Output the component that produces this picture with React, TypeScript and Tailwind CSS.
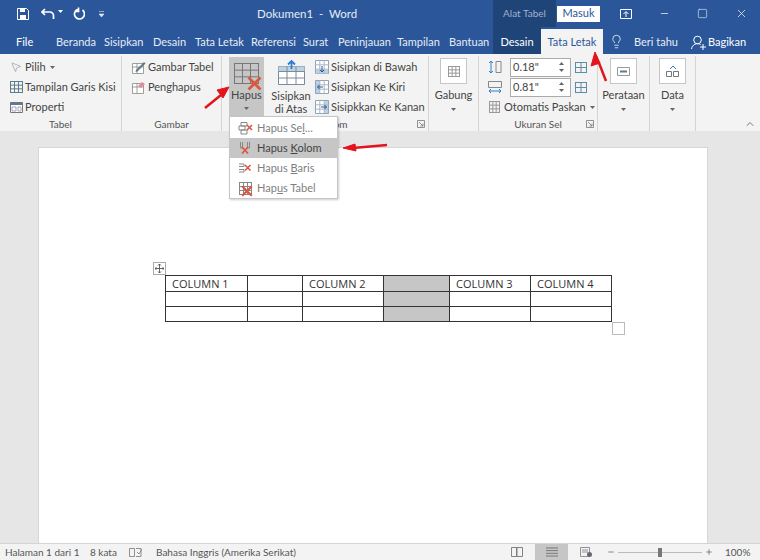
import { ReactNode } from "react";
import { Minus, Plus, Square, X, Lightbulb, ChevronUp, MousePointer2 } from "lucide-react";

const blue = "#2b579a";

const Caret = ({ className = "" }: { className?: string }) => (
  <svg width="5" height="3" viewBox="0 0 5 3" className={className}>
    <path d="M0 0h5L2.500 3z" fill="#666" />
  </svg>
);

// little table glyph used across the ribbon
const Grid = ({ w = 14, h = 14, cols = 3, rows = 3, stroke = "#7d8a99" }: { w?: number; h?: number; cols?: number; rows?: number; stroke?: string }) => {
  const v = Array.from({ length: cols + 1 }, (_, i) => (i * (w - 1)) / cols + 0.5);
  const r = Array.from({ length: rows + 1 }, (_, i) => (i * (h - 1)) / rows + 0.5);
  return (
    <svg width={w} height={h} viewBox={`0 0 ${w} ${h}`} className="shrink-0">
      {v.map((x) => <line key={x} x1={x} x2={x} y1="0" y2={h} stroke={stroke} strokeWidth="1" />)}
      {r.map((y) => <line key={y} y1={y} y2={y} x1="0" x2={w} stroke={stroke} strokeWidth="1" />)}
    </svg>
  );
};

const RedX = ({ size = 10 }: { size?: number }) => (
  <svg width={size} height={size} viewBox="0 0 10 10" className="shrink-0">
    <path d="M1 1l8 8M9 1L1 9" stroke="#d9573f" strokeWidth="1.800" />
  </svg>
);

const Launcher = () => (
  <svg width="8" height="8" viewBox="0 0 8 8" className="absolute bottom-[3px] right-[3px]">
    <path d="M.5.5h7v7h-7z M2 2l4 4M6 3.500V6H3.500" fill="none" stroke="#777" strokeWidth=".8" />
  </svg>
);

const Group = ({ label, width, children, launcher, labelClass = "" }: { label: string; width: string; children: ReactNode; launcher?: boolean; labelClass?: string }) => (
  <div className={`${width} relative flex h-[75px] shrink-0 flex-col border-r border-[#d4d4d4]`}>
    <div className="flex h-[62px] items-start">{children}</div>
    <div className={`absolute bottom-0 left-0 right-0 text-center text-[10px] leading-[13px] text-[#555] ${labelClass}`}>{label}</div>
    {launcher && <Launcher />}
  </div>
);

const SmallBtn = ({ icon, children }: { icon: ReactNode; children: ReactNode }) => (
  <div className="flex h-5 items-center gap-[2px] whitespace-nowrap text-[11px] text-[#444]">
    <span className="flex w-[14px] justify-center">{icon}</span>
    {children}
  </div>
);

const BoxBtn = ({ label, icon }: { label: string; icon: ReactNode }) => (
  <div className="flex w-full flex-col items-center pt-[2px] text-[11px] text-[#444]">
    <div className="flex h-[26px] w-[27px] items-center justify-center border border-[#c6c6c6] bg-white">{icon}</div>
    <div className="mt-[4px] leading-[14px]">{label}</div>
    <Caret className="mt-[6px]" />
  </div>
);

// insert row / column glyphs: grid with one tinted band and a small blue arrow
const InsertIcon = ({ band, arrow }: { band: string; arrow: string }) => (
  <svg width="14" height="14" viewBox="0 0 14 14">
    <path d="M.5.500h13v13H.5z" fill="#fff" stroke="#8ea3b5" />
    <path d={band} fill="#bcd3e6" />
    <path d="M.5 4.800h13M.5 9.200h13M4.800.5v13M9.200.5v13" stroke="#a9b8c6" />
    <path d={arrow} fill="none" stroke="#2b579a" />
  </svg>
);

const tabs = [
  { name: "Beranda", w: "w-[48px]" },
  { name: "Sisipkan", w: "w-[49px]" },
  { name: "Desain", w: "w-[42px]" },
  { name: "Tata Letak", w: "w-[56px]" },
  { name: "Referensi", w: "w-[52px]" },
  { name: "Surat", w: "w-[35px]" },
  { name: "Peninjauan", w: "w-[59px]" },
  { name: "Tampilan", w: "w-[52px]" },
  { name: "Bantuan", w: "w-[44px]" },
];

const SelIcon = () => (
  <svg width="15" height="14" viewBox="0 0 15 14">
    <path d="M3 1.500h6v3.500H3zM1 5h6v4H1zM3 9h6v4H3z" fill="#fff" stroke="#888" />
    <path d="M9 4l5 5M14 4L9 9" stroke="#d9573f" strokeWidth="1.600" />
  </svg>
);
const KolomIcon = () => (
  <svg width="15" height="14" viewBox="0 0 15 14">
    <path d="M2.500 1v6h2V1M9.500 1v6h2V1" fill="none" stroke="#888" />
    <path d="M4 6l6 6.500M10 6l-6 6.500" stroke="#d9573f" strokeWidth="1.700" />
  </svg>
);
const BarisIcon = () => (
  <svg width="15" height="14" viewBox="0 0 15 14">
    <path d="M1 3h5v2.500H1M1 8.500h5V11H1" fill="none" stroke="#888" />
    <path d="M7 4l5.500 5.500M12.500 4L7 9.500" stroke="#d9573f" strokeWidth="1.600" />
  </svg>
);
const TabelIcon = () => (
  <span className="relative flex">
    <Grid w={13} h={13} cols={3} rows={3} stroke="#888" />
    <span className="absolute left-[2px] top-[3px]"><RedX size={12} /></span>
  </span>
);

const menu = [
  { pre: "Hapus Se", u: "l", post: "...", hi: false, icon: <SelIcon /> },
  { pre: "Hapus ", u: "K", post: "olom", hi: true, icon: <KolomIcon /> },
  { pre: "Hapus ", u: "B", post: "aris", hi: false, icon: <BarisIcon /> },
  { pre: "Hap", u: "u", post: "s Tabel", hi: false, icon: <TabelIcon /> },
];

const widths = ["w-[82px]", "w-[55px]", "w-[81px]", "w-[66px]", "w-[81px]", "w-[81px]"];
const heads = ["COLUMN 1", "", "COLUMN 2", "", "COLUMN 3", "COLUMN 4"];

export default function App() {
  return (
    <div className="relative flex h-[560px] w-[760px] flex-col overflow-hidden bg-[#e6e6e6] font-['Lato','Noto_Sans',sans-serif] text-[#444]">
      {/* title bar */}
      <div className="flex h-[27px] shrink-0 items-center text-white" style={{ background: blue }}>
        <div className="flex w-[110px] items-center pl-[17px]">
          <svg width="12" height="12" viewBox="0 0 12 12">
            <path d="M.5.500h9l2 2v9H.5z" fill="none" stroke="#fff" />
            <path d="M3 .5h5v3.500H3zM3 7h6v4.500H3z" fill="#fff" />
          </svg>
          <svg width="15" height="12" viewBox="0 0 15 12" className="ml-[12px]">
            <path d="M4 1L1 4l3 3M1.500 4H9a3.500 3.500 0 0 1 3.500 3.500V11" fill="none" stroke="#fff" strokeWidth="1.700" />
          </svg>
          <svg width="5" height="3" viewBox="0 0 5 3" className="ml-[2px] mb-[4px]"><path d="M0 0h5L2.500 3z" fill="#fff" /></svg>
          <svg width="13" height="13" viewBox="0 0 13 13" className="ml-[9px]">
            <path d="M9.500 2.500a5 5 0 1 1-4-.9M5.500 0v4h-4" fill="none" stroke="#fff" strokeWidth="1.700" transform="translate(1 0.500)" />
          </svg>
          <svg width="5" height="6" viewBox="0 0 5 6" className="ml-[14px]"><path d="M0 .5h5M0 3h5L2.500 6z" fill="#dfe6f1" stroke="#dfe6f1" strokeWidth=".6" /></svg>
        </div>
        <div className="w-[383px] whitespace-nowrap pl-[147px] text-[11.500px] text-[#e6ecf5]">Dokumen1&nbsp; -&nbsp; Word</div>
        <div className="flex h-full w-[63px] items-center justify-center bg-[#1f4477] text-[10px] text-[#9fb3cf]">Alat Tabel</div>
        <div className="ml-[1px] flex h-[16px] w-[43px] items-center justify-center bg-white text-[11px] text-[#2b579a]">Masuk</div>
        <svg width="12" height="10" viewBox="0 0 12 10" className="ml-[20px]">
          <path d="M.5.500h11v9H.5z" fill="none" stroke="#fff" />
          <path d="M6 8V3M3.500 5L6 2.500 8.500 5" fill="none" stroke="#fff" />
        </svg>
        <Minus size={11} className="ml-[27px]" strokeWidth={1.500} />
        <Square size={11} className="ml-[27px]" strokeWidth={1.200} />
        <X size={13} className="ml-[27px]" strokeWidth={1.300} />
      </div>

      {/* tabs */}
      <div className="flex h-[27px] shrink-0 items-end text-[11px] leading-[24px] text-white" style={{ background: blue }}>
        <div className="h-[24px] w-[56px] pl-[16px]">File</div>
        {tabs.map((t) => (
          <div key={t.name} className={`${t.w} h-[24px] whitespace-nowrap text-[#e6ecf5]`}>{t.name}</div>
        ))}
        <div className="flex h-[27px] w-[48px] items-center justify-center bg-[#1f4477] pt-[3px]">Desain</div>
        <div className="flex h-[25px] w-[62px] items-center justify-center bg-[#f3f3f3] pt-[1px] text-[#2b579a]">Tata Letak</div>
        <Lightbulb size={15} strokeWidth={1.200} className="mb-[5px] ml-[6px]" />
        <div className="ml-[10px] h-[24px] w-[40px] whitespace-nowrap text-[#e6ecf5]">Beri tahu</div>
        <svg width="16" height="15" viewBox="0 0 16 15" className="mb-[4px] ml-[17px]">
          <circle cx="6.500" cy="5" r="3.800" fill="none" stroke="#fff" />
          <path d="M.5 14a6 6 0 0 1 9-4.500M9 12h6M12 9v6" fill="none" stroke="#fff" />
        </svg>
        <div className="ml-[1px] h-[24px] whitespace-nowrap">Bagikan</div>
      </div>

      {/* ribbon */}
      <div className="flex h-[77px] shrink-0 items-start bg-[#f3f3f3] pt-[2px]">
        <Group label="Tabel" width="w-[122px]">
          <div className="flex flex-col pl-[9px] pt-[1px]">
            <SmallBtn icon={<MousePointer2 size={12} strokeWidth={1} color="#777" />}>
              Pilih <Caret className="ml-[2px]" />
            </SmallBtn>
            <SmallBtn icon={<Grid w={13} h={12} cols={3} rows={3} stroke="#5f7c8c" />}>Tampilan Garis Kisi</SmallBtn>
            <SmallBtn
              icon={
                <svg width="13" height="11" viewBox="0 0 13 11">
                  <path d="M.5.500h12v10H.5z" fill="#fff" stroke="#777" />
                  <path d="M.5.500h12v2.500H.5z" fill="#5f7c8c" />
                  <path d="M2 5h4v4H2zM8 5h3v4H8z" fill="none" stroke="#88a" strokeWidth=".7" />
                </svg>
              }
            >
              Properti
            </SmallBtn>
          </div>
        </Group>

        <Group label="Gambar" width="w-[100px]">
          <div className="flex flex-col pl-[10px] pt-[1px]">
            <SmallBtn
              icon={
                <svg width="14" height="13" viewBox="0 0 14 13">
                  <path d="M.5 2.500h11v10H.5zM.5 6h11M5 2.500v10" fill="#fff" stroke="#888" strokeWidth=".8" />
                  <path d="M4 9l8-8 1.500 1.500-8 8-2 .5z" fill="#5f7c8c" />
                </svg>
              }
            >
              Gambar Tabel
            </SmallBtn>
            <SmallBtn
              icon={
                <svg width="14" height="13" viewBox="0 0 14 13">
                  <path d="M.5 2.500h11v10H.5zM.5 6h11M5 2.500v10" fill="#fff" stroke="#888" strokeWidth=".8" />
                  <path d="M6 5l4-4 3 2-4 4z" fill="#e58a9b" />
                </svg>
              }
            >
              Penghapus
            </SmallBtn>
          </div>
        </Group>

        <Group label="Baris & Kolom" width="w-[207px]" launcher labelClass="pr-[17px]">
          <div className="ml-[7px] mt-[1px] flex h-[61px] w-[35px] shrink-0 flex-col items-center bg-[#c6c6c6] pt-[6px] text-[11px]">
            <div className="relative">
              <Grid w={25} h={21} cols={3} rows={3} stroke="#777" />
              <span className="absolute -bottom-[7px] -right-[3px]"><RedX size={15} /></span>
            </div>
            <div className="mt-[4px] leading-[14px]">Hapus</div>
            <Caret className="mt-[5px]" />
          </div>
          <div className="flex w-[51px] shrink-0 flex-col items-center pl-[3px] pt-[4px] text-[11px] leading-[13px]">
            <svg width="27" height="25" viewBox="0 0 27 25">
              <path d="M.5 6.500h26v18H.5z" fill="#fff" stroke="#7d8a99" />
              <path d="M.5 6.500h26v5H.5z" fill="#bcd3e6" />
              <path d="M.5 11.500h26M.5 18h26M9 6.500v18M18 6.500v18" stroke="#7d8a99" />
              <path d="M13.500 9V1.500M10 4.500l3.500-3.500L17 4.500" fill="none" stroke="#2b7cd3" strokeWidth="1.800" />
            </svg>
            <div className="mt-[4px] text-center">Sisipkan<br />di Atas</div>
          </div>
          <div className="flex flex-col pt-[1px]">
            <SmallBtn icon={<InsertIcon band="M1 9.500h12v4H1z" arrow="M7 6v6M5 10l2 2 2-2" />}>Sisipkan di Bawah</SmallBtn>
            <SmallBtn icon={<InsertIcon band="M1 1h4v12H1z" arrow="M8 7H2.500M4.500 5l-2 2 2 2" />}>Sisipkan Ke Kiri</SmallBtn>
            <SmallBtn icon={<InsertIcon band="M9 1h4v12H9z" arrow="M6 7h5.500M9.500 5l2 2-2 2" />}>Sisipkkan Ke Kanan</SmallBtn>
          </div>
        </Group>

        <Group label="" width="w-[50px]">
          <BoxBtn label="Gabung" icon={<Grid w={12} h={11} cols={3} rows={3} stroke="#999" />} />
        </Group>

        <Group label="Ukuran Sel" width="w-[119px]" launcher>
          <div className="flex flex-col pl-[9px] pt-[1px]">
            <div className="flex h-[20px] items-center">
              <svg width="14" height="14" viewBox="0 0 14 14" className="mr-[8px]">
                <path d="M3 1v12M1 3l2-2 2 2M1 11l2 2 2-2" fill="none" stroke="#2b7cd3" />
                <path d="M8 1.500h5v11H8z" fill="none" stroke="#888" />
              </svg>
              <div className="flex h-[19px] w-[61px] items-center justify-between border border-[#ababab] bg-white pl-[2px] pr-[6px] text-[11px]">
                0.18"
                <span className="flex flex-col gap-[4px]"><Caret className="rotate-180" /><Caret /></span>
              </div>
              <span className="ml-[4px]"><Grid w={12} h={11} cols={2} rows={2} stroke="#5f8aa8" /></span>
            </div>
            <div className="flex h-[20px] items-center">
              <svg width="14" height="14" viewBox="0 0 14 14" className="mr-[8px]">
                <path d="M.5 1.500h13v6H.5z" fill="none" stroke="#888" />
                <path d="M1 11h12M3 9l-2 2 2 2M11 9l2 2-2 2" fill="none" stroke="#2b7cd3" />
              </svg>
              <div className="flex h-[19px] w-[61px] items-center justify-between border border-[#ababab] bg-white pl-[2px] pr-[6px] text-[11px]">
                0.81"
                <span className="flex flex-col gap-[4px]"><Caret className="rotate-180" /><Caret /></span>
              </div>
              <span className="ml-[4px]"><Grid w={12} h={11} cols={2} rows={2} stroke="#5f8aa8" /></span>
            </div>
            <div className="flex h-[20px] items-center gap-[4px] whitespace-nowrap pl-[1px] text-[11px]">
              <Grid w={11} h={12} cols={3} rows={3} stroke="#999" />
              Otomatis Paskan <Caret />
            </div>
          </div>
        </Group>

        <Group label="" width="w-[52px]">
          <BoxBtn
            label="Perataan"
            icon={
              <svg width="13" height="9" viewBox="0 0 13 9">
                <path d="M.5.500h12v8H.5z" fill="none" stroke="#999" />
                <path d="M3 4.500h7" stroke="#5f7c8c" strokeWidth="2" />
              </svg>
            }
          />
        </Group>

        <Group label="" width="w-[46px]">
          <BoxBtn
            label="Data"
            icon={
              <svg width="13" height="12" viewBox="0 0 13 12">
                <path d="M.5 6.500h5v5h-5zM7.500 6.500h5v5h-5z" fill="none" stroke="#777" />
                <path d="M4 4l3-3 3 3" fill="none" stroke="#2b7cd3" />
              </svg>
            }
          />
        </Group>

        <div className="flex h-[75px] flex-1 items-end justify-end pb-[1px] pr-[4px]">
          <ChevronUp size={12} color="#777" />
        </div>
      </div>

      {/* document */}
      <div className="flex-1 overflow-hidden pl-[38px] pt-[16px]">
        <div className="relative h-[420px] w-[670px] border border-[#d6d6d6] bg-white pl-[126px] pt-[127px]">
          <table className="table-fixed border-collapse font-['Open_Sans',sans-serif] text-[11px] leading-[15px] text-[#333]">
            <tbody>
              {[0, 1, 2].map((r) => (
                <tr key={r} className="h-[15px]">
                  {widths.map((w, c) => (
                    <td key={c} className={`${w} h-[15px] border border-[#333] px-[6px] py-0 ${c === 3 ? "bg-[#c6c6c6]" : ""}`}>
                      {r === 0 ? heads[c] : ""}
                    </td>
                  ))}
                </tr>
              ))}
            </tbody>
          </table>
          <div className="absolute left-[114px] top-[114px] flex h-[13px] w-[13px] items-center justify-center border border-[#aaa] bg-white">
            <svg width="9" height="9" viewBox="0 0 9 9">
              <path d="M4.500 0v9M0 4.500h9M3 1.500L4.500 0 6 1.500M3 7.500L4.500 9 6 7.500M1.500 3L0 4.500 1.500 6M7.500 3L9 4.500 7.500 6" fill="none" stroke="#444" strokeWidth=".8" />
            </svg>
          </div>
          <div className="absolute left-[573px] top-[174px] h-[13px] w-[13px] border border-[#bbb] bg-white" />
        </div>
      </div>

      {/* status bar */}
      <div className="flex h-[17px] shrink-0 items-center border-t border-[#d4d4d4] bg-[#f3f3f3] text-[10px] text-[#555]">
        <div className="w-[90px] pl-[5px]">Halaman 1 dari 1</div>
        <div className="w-[39px]">8 kata</div>
        <svg width="13" height="9" viewBox="0 0 13 9" className="mr-[14px]">
          <path d="M.5.500h5v8h-5zM7 .5h5v8H7M8 4l2 2 3-5" fill="none" stroke="#777" strokeWidth=".8" />
        </svg>
        <div className="w-[355px] whitespace-nowrap">Bahasa Inggris (Amerika Serikat)</div>
        <svg width="12" height="10" viewBox="0 0 12 10" className="mr-[12px]">
          <path d="M.5.500h5v9h-5zM6 .5h5.500v9H6z" fill="none" stroke="#777" strokeWidth=".9" />
        </svg>
        <div className="flex h-full w-[33px] items-center justify-center bg-[#c6c6c6]">
          <svg width="12" height="10" viewBox="0 0 12 10">
            <path d="M0 1h12M0 3.600h12M0 6.300h12M0 9h12" stroke="#777" />
          </svg>
        </div>
        <svg width="12" height="10" viewBox="0 0 12 10" className="ml-[12px]">
          <path d="M.5.500h9v9h-9zM2 3h6M2 5h6" fill="none" stroke="#888" strokeWidth=".9" />
          <circle cx="9.500" cy="7.500" r="2.500" fill="#667" />
        </svg>
        <Minus size={8} className="ml-[15px]" />
        <div className="relative ml-[3px] h-[1px] w-[84px] bg-[#bbb]">
          <div className="absolute left-[40px] top-[-4px] h-[9px] w-[4px] bg-[#777]" />
        </div>
        <Plus size={8} className="ml-[3px]" />
        <div className="ml-[12px]">100%</div>
      </div>

      {/* dropdown */}
      <div className="absolute left-[229px] top-[116px] w-[109px] border border-[#c6c6c6] bg-white pt-[1px] text-[11px] shadow-[1px_1px_2px_rgba(0,0,0,0.2)]">
        {menu.map((m, i) => (
          <div key={i} className={`flex h-5 items-center pl-[3px] ${m.hi ? "bg-[#c6c6c6] text-[#444]" : "text-[#808080]"}`}>
            <span className="flex w-[24px] items-center justify-center">{m.icon}</span>
            <span className="whitespace-nowrap">
              {m.pre}<u>{m.u}</u>{m.post}
            </span>
          </div>
        ))}
      </div>

      {/* annotation arrows */}
      <svg width="760" height="560" viewBox="0 0 760 560" className="pointer-events-none absolute left-0 top-0">
        <g fill="#e3141b" stroke="#e3141b">
          <path d="M205 108l16-13" strokeWidth="2.500" />
          <path d="M229 87l-12 3 6 8z" />
          <path d="M387 145l-34 3" strokeWidth="2.500" />
          <path d="M343 148l12-4 1 7z" />
          <path d="M606 81l-7-18" strokeWidth="2.500" />
          <path d="M595 52l-4 14 9-3z" />
        </g>
      </svg>
    </div>
  );
}
